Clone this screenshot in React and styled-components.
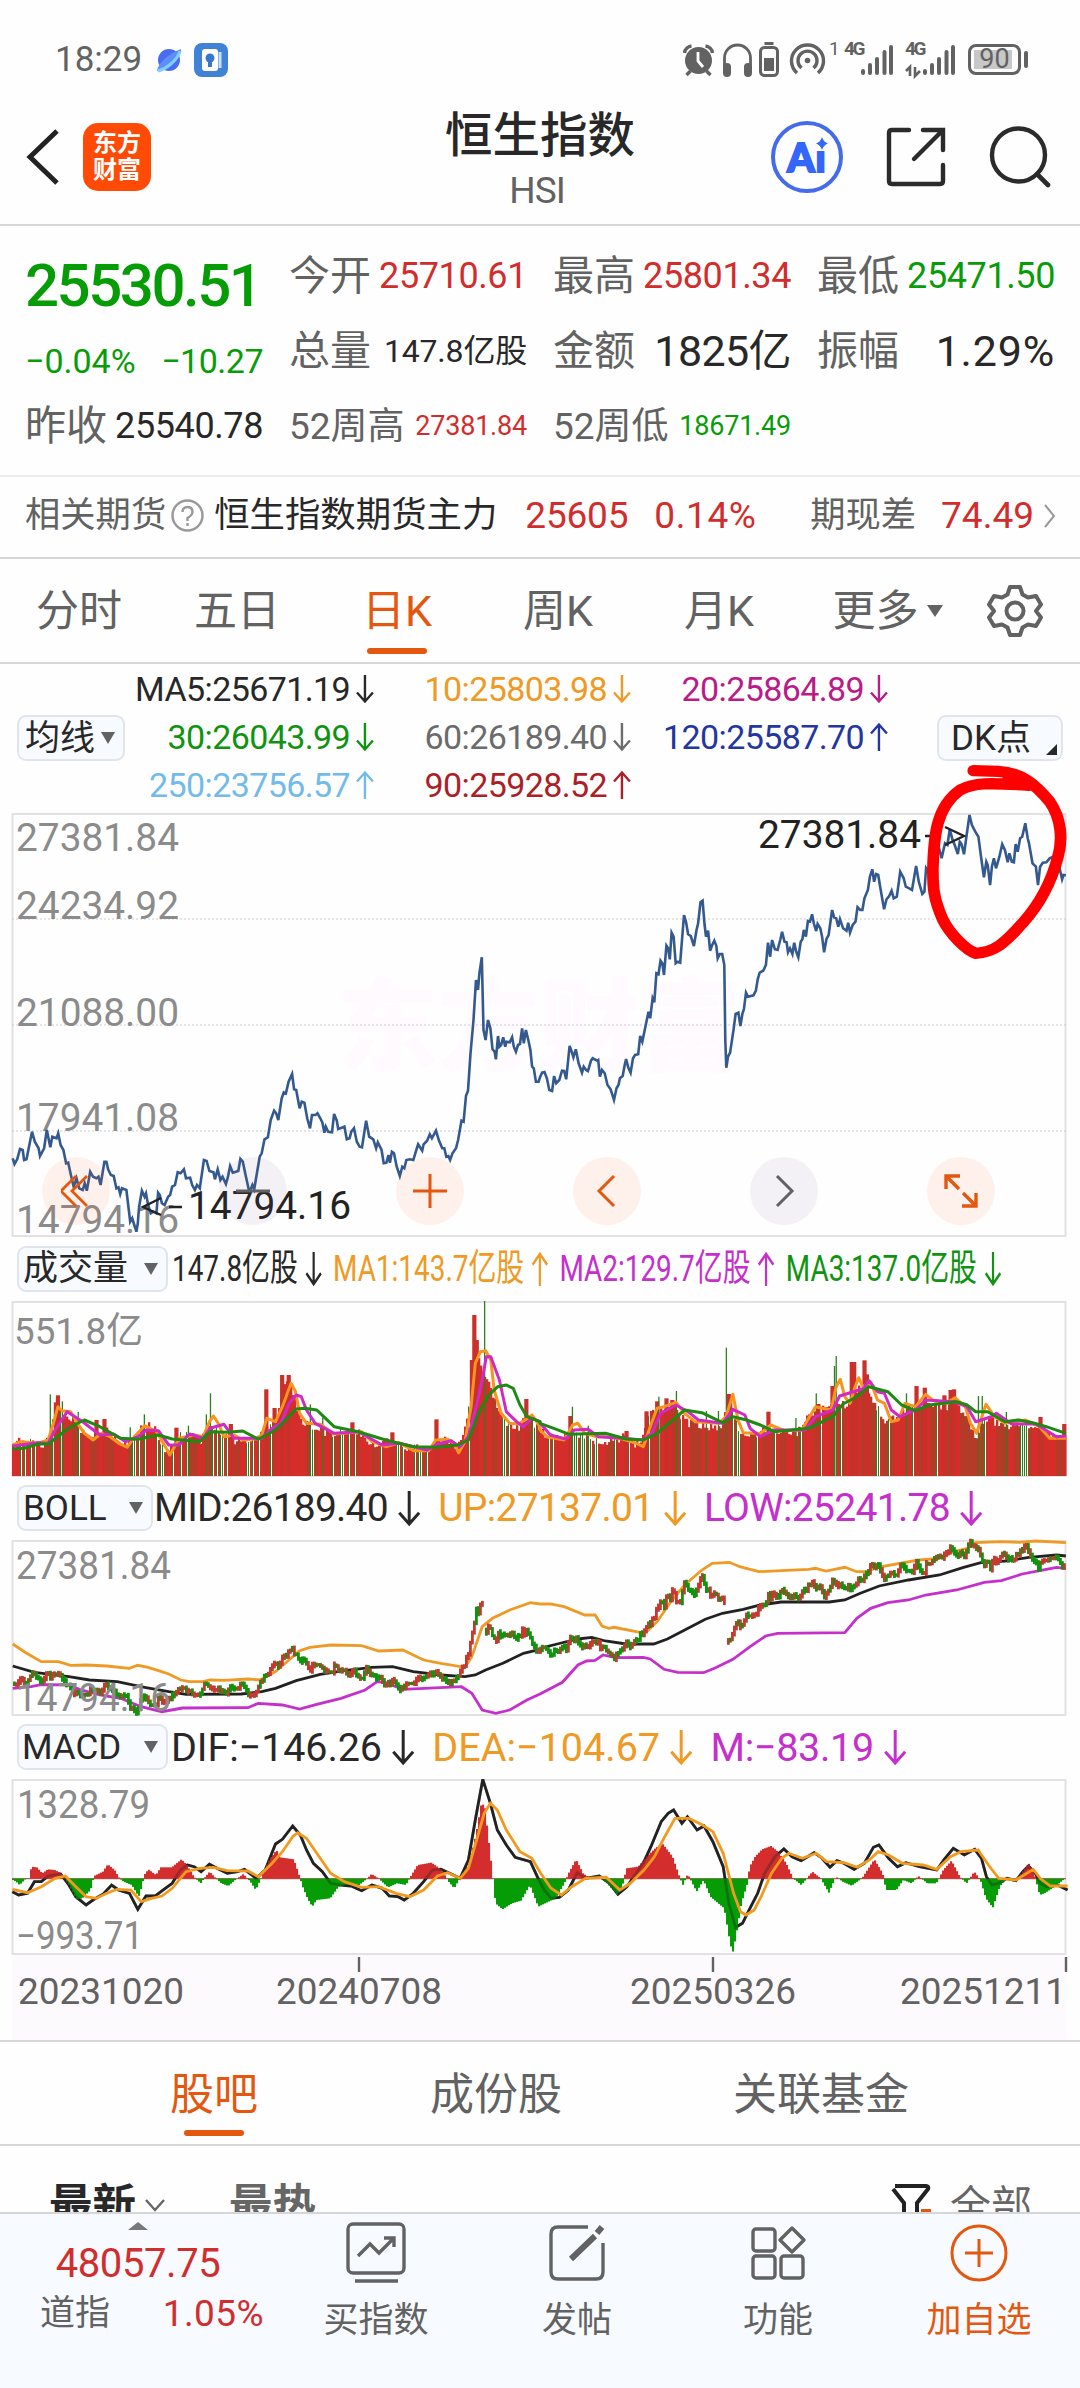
import styled, { createGlobalStyle } from 'styled-components';

const GlobalStyle = createGlobalStyle`
*{
    box-sizing:border-box;
}
body{
    margin:0;
    background-color:#fefefe;
    font-family:Roboto, "Noto Sans CJK SC", sans-serif;
    color:#282828;
}
`;

const RED = '#d22d2d';
const GREEN = '#089c08';
const GRAY = '#626262';
const ORANGE = '#e4570f';
const YELLOW = '#ee9a25';
const PURPLE = '#c52fcb';

const Container = styled.div`
width:1080px;
height:2388px;
display:flex;
flex-direction:column;
overflow:hidden;
background-color:#fefefe;
`;

const Num = styled.span`
font-size:${p => p.$size || 36}px;
letter-spacing:${p => p.$ls || 0}px;
font-weight:${p => p.$weight || 400};
color:${p => p.$color || 'inherit'};
line-height:1;
white-space:nowrap;
`;

/* status bar */

const StatusBar = styled.div`
display:flex;
justify-content:space-between;
align-items:center;
height:80px;
padding:40px 51px 0 55px;
color:${GRAY};
`;

const StatusGroup = styled.div`
display:flex;
align-items:center;
`;

const SmallIcon = styled.svg`
display:block;
flex:none;
overflow:visible;
margin-left:${p => p.$ml || 0}px;
`;

/* title bar */

const TitleBar = styled.div`
display:grid;
grid-template-columns:356px 1fr 356px;
height:146px;
border-bottom:2px solid #d6d6d8;
`;

const TitleLeft = styled.div`
display:flex;
align-items:center;
gap:24px;
padding:11px 0 0 26px;
`;

const Logo = styled.div`
display:flex;
flex-direction:column;
align-items:center;
justify-content:center;
width:68px;
height:68px;
border-radius:15px;
background-color:#ff4b05;
color:white;
font-size:24px;
font-weight:700;
line-height:27px;
`;

const TitleCenter = styled.div`
display:flex;
flex-direction:column;
align-items:center;
padding:32px 0 0 0;
`;

const Title = styled.div`
font-size:47.5px;
font-weight:500;
line-height:48px;
`;

const SubTitle = styled.div`
margin-top:11px;
padding-right:6px;
color:${GRAY};
font-size:37px;
letter-spacing:-1px;
line-height:40px;
`;

const TitleRight = styled.div`
display:flex;
align-items:center;
justify-content:flex-end;
gap:43px;
padding:11px 29px 0 0;
`;

/* quote */

const Quote = styled.div`
display:grid;
grid-template-columns:repeat(4, 238px);
grid-template-rows:repeat(3, 75px);
column-gap:26px;
height:251px;
padding:13px 25px 0 25px;
border-bottom:2px solid #ececec;
`;

const Cell = styled.div`
display:flex;
align-items:center;
justify-content:space-between;
padding-top:${p => p.$top || 0}px;
`;

const Label = styled.span`
color:${GRAY};
font-size:${p => p.$size || 41}px;
letter-spacing:${p => p.$ls || 0}px;
line-height:1;
white-space:nowrap;
`;

const Futures = styled.div`
display:flex;
align-items:center;
height:82px;
padding:0 24px 2px 25px;
border-bottom:2px solid #d6d6d8;
`;

const FutureName = styled.span`
margin:0 28px 0 10px;
font-size:35.4px;
line-height:1;
white-space:nowrap;
`;

/* tabs */

const Tabs = styled.div`
display:grid;
grid-template-columns:158px 158px 162px 160px 162px 175px 80px;
height:105px;
border-bottom:2px solid #d6d6d8;
`;

const Tab = styled.div`
position:relative;
display:flex;
align-items:center;
justify-content:center;
gap:8px;
padding-top:${p => p.$top || 2}px;
color:${p => (p.$active ? ORANGE : GRAY)};
font-size:${p => p.$size || 43}px;
line-height:1;
white-space:nowrap;
&::after{
    content:'';
    display:${p => (p.$active ? 'block' : 'none')};
    position:absolute;
    bottom:${p => p.$line || 8}px;
    width:60px;
    height:6px;
    border-radius:3px;
    background-color:${ORANGE};
}
`;

const Caret = styled.i`
border:${p => p.$w || 7}px solid transparent;
border-top:12px solid ${GRAY};
border-bottom:0;
`;

/* charts */

const Legend = styled.div`
display:flex;
justify-content:space-between;
align-items:center;
height:150px;
padding:0 17px;
`;

const MaGrid = styled.div`
display:grid;
grid-template-columns:237px 257px 257px;
grid-auto-rows:48px;
margin:-2px 0 0 12px;
flex:1;
`;

const MaItem = styled.div`
display:flex;
align-items:center;
justify-content:flex-end;
gap:6px;
color:${p => p.$color};
`;

const Pill = styled.div`
display:flex;
align-items:center;
justify-content:space-between;
position:relative;
flex:none;
width:${p => p.$w}px;
height:46px;
padding:${p => p.$pad || '0 8px 0 6px'};
border:2px solid #e1e4ec;
border-radius:9px;
background-color:#f7faff;
font-size:35px;
line-height:1;
white-space:nowrap;
`;

const Corner = styled.i`
position:absolute;
right:4px;
bottom:4px;
border-left:11px solid transparent;
border-bottom:11px solid #282828;
`;

const IndicatorHead = styled.div`
display:flex;
align-items:center;
height:${p => p.$h || 63}px;
padding:0 17px 1px;
`;

const IndicatorValues = styled.div`
display:flex;
align-items:center;
margin-left:${p => p.$ml}px;
transform:scaleX(${p => p.$scale || 1});
transform-origin:left center;
`;

const Value = styled.span`
display:flex;
align-items:center;
gap:${p => p.$gap || 10}px;
margin-right:${p => p.$mr || 18}px;
color:${p => p.$color || 'inherit'};
font-size:${p => p.$size || 39}px;
letter-spacing:${p => p.$ls || 0}px;
line-height:1;
white-space:nowrap;
`;

const ChartBox = styled.div`
position:relative;
width:1055px;
height:${p => p.$h}px;
margin-left:12px;
`;

const Plot = styled.svg`
display:block;
overflow:visible;
font-family:Roboto, "Noto Sans CJK SC", sans-serif;
`;

const Controls = styled.div`
position:absolute;
left:30px;
bottom:12px;
display:flex;
gap:109px;
`;

const RoundBtn = styled.button`
all:unset;
display:flex;
align-items:center;
justify-content:center;
width:68px;
height:68px;
border-radius:50%;
background-color:${p => (p.$gray ? 'rgba(120,90,140,0.08)' : 'rgba(255,90,30,0.08)')};
cursor:pointer;
`;

const Dates = styled.div`
height:85px;
margin-left:12px;
width:1055px;
background-color:#fdfafd;
`;

/* bottom part */

const ForumTabs = styled.div`
display:grid;
grid-template-columns:350px 214px 436px;
padding-left:39px;
height:106px;
border-top:2px solid #d6d6d8;
border-bottom:2px solid #d6d6d8;
`;

const PostFilter = styled.div`
display:flex;
align-items:flex-start;
height:66px;
padding:37px 48px 0 49px;
overflow:hidden;
`;

const FilterText = styled.span`
font-size:${p => p.$size || 43.5}px;
font-weight:${p => p.$weight || 700};
color:${p => p.$color || '#282828'};
line-height:46px;
`;

const BottomBar = styled.div`
display:grid;
grid-template-columns:276px 200px 202px 200px 202px;
height:176px;
border-top:2px solid #d6d6d8;
background-color:#f7faff;
`;

const IndexBox = styled.div`
display:flex;
flex-direction:column;
align-items:center;
`;

const IndexRow = styled.div`
display:flex;
justify-content:space-between;
align-items:center;
width:224px;
margin:11px 0 0 28px;
`;

const UpMark = styled.i`
margin-top:8px;
border:10px solid transparent;
border-bottom:8px solid #77777c;
border-top:0;
`;

const BarItem = styled.div`
display:flex;
flex-direction:column;
align-items:center;
gap:16px;
padding-top:7px;
color:${p => p.$color || GRAY};
font-size:35px;
line-height:40px;
`;

const Arrow = ({ up, size = 28 }) => (
    <SmallIcon width={size * 0.64} height={size} viewBox="0 0 18 28" fill="none" stroke="currentColor" strokeWidth="2.4">
        <path d={up ? 'M9 28V2M1 10.5L9 1.5l8 9' : 'M9 0v26M1 17.5l8 9 8-9'} />
    </SmallIcon>
);

const parse = (str) => str.trim().split(/\s+/).map(p => p.split(',').map(Number));

// data is stored as two halves of 540px each, in 1/3 px steps
const series = (left, right, dyLeft, dyRight = dyLeft) => [
    ...parse(left).map(([x, y]) => [x * 0.3444 - 12, y / 3 - dyLeft]),
    ...parse(right).map(([x, y]) => [x * 0.3444 + 528, y / 3 - dyRight]),
];

const toPoints = (data) => data.map(([x, y]) => `${x.toFixed(1)},${y.toFixed(1)}`).join(' ');

const valueAt = (data, x) => {
    let i = 1;
    while (i < data.length - 1 && data[i][0] < x) i += 1;
    const [x0, y0] = data[i - 1];
    const [x1, y1] = data[i];
    if (x1 === x0) return y1;
    const t = Math.min(1, Math.max(0, (x - x0) / (x1 - x0)));
    return y0 + (y1 - y0) * t;
};

const noise = (n) => {
    const v = Math.sin(n * 127.1) * 43758.5453;
    return v - Math.floor(v);
};

const price = series(
    `37,1075 42,1092 50,1078 58,1047 66,1050 70,1080 77,1078 93,995 101,1025 112,1045 116,1068 128,1045 136,990 146,1042 152,1010 164,1015 169,1000 176,1035 184,1050 192,1090 198,1088 206,1125 214,1160 222,1135 230,1165 240,1170 246,1150 252,1172 262,1115 270,1130 280,1135 286,1130 292,1155 303,1085 309,1085 314,1108 322,1125 330,1128 338,1165 344,1162 349,1182 354,1165 367,1170 374,1230 378,1265 384,1255 390,1275 396,1295 400,1270 404,1220 412,1172 420,1190 424,1180 430,1215 438,1240 446,1235 454,1240 459,1178 464,1185 470,1210 478,1215 488,1190 494,1185 500,1160 508,1155 516,1117 524,1120 534,1108 540,1135 552,1133 558,1155 566,1170 572,1155 580,1165 592,1080 600,1083 608,1113 620,1117 624,1138 632,1108 640,1140 646,1130 656,1152 662,1130 668,1098 676,1118 692,1113 698,1077 705,1085 712,1120 722,1168 728,1168 733,1155 738,1168 746,1120 754,1070 760,1060 768,1018 778,1012 786,960 796,932 802,940 808,960 818,895 824,877 830,880 838,845 848,822 854,868 860,870 870,925 876,905 884,908 892,955 900,985 906,945 916,945 922,940 930,955 936,968 942,998 946,980 953,995 964,997 970,942 978,962 982,987 996,982 1000,980 1007,1018 1015,1015 1020,995 1028,985 1036,1025 1044,1040 1051,1042 1063,962 1072,1010 1084,1018 1092,1045 1097,1027 1108,1050 1114,1090 1122,1088 1128,1065 1132,1088 1138,1055 1144,1060 1152,1100 1161,1128 1168,1100 1174,1105 1180,1080 1190,1078 1200,1080 1206,1060 1214,1033 1226,1052 1230,1033 1240,1022 1248,1003 1254,1015 1266,992 1274,1020 1284,1045 1290,1045 1296,1070 1302,1068 1307,1080 1314,1060 1324,1045 1330,1020 1340,962 1346,965 1353,887 1359,872 1366,760 1375,660 1382,540 1388,570 1392,520 1399,472 1404,690 1410,720 1417,660 1424,685 1430,748 1436,755 1440,778 1446,708 1450,740 1455,735 1461,712 1467,740 1471,725 1480,727 1487,712 1492,740 1498,755 1504,735 1510,732 1516,685 1521,730 1527,690 1535,725 1540,750 1545,800 1550,805 1556,845 1564,845`,
    `0,1012 6,998 13,996 20,1015 27,1050 35,1053 41,1008 47,1030 56,1020 64,992 70,993 76,1018 86,918 92,935 97,952 104,928 112,970 122,998 127,980 134,990 139,993 148,962 153,955 166,962 169,960 174,1010 180,990 188,1000 196,1035 205,1048 215,1080 222,1045 228,1035 232,1015 240,1008 246,975 250,957 256,982 263,998 270,955 276,945 285,943 291,888 297,905 306,860 315,815 320,835 327,775 332,787 338,700 344,703 350,662 355,670 360,705 367,617 372,625 377,658 382,578 388,590 394,670 400,665 407,668 418,525 424,545 430,583 438,588 447,618 454,572 459,550 466,487 472,482 478,555 482,590 488,572 494,632 500,615 506,602 512,617 516,655 522,642 529,642 535,675 538,900 541,983 546,950 552,938 562,868 568,822 576,818 582,858 588,820 592,808 598,758 604,770 620,766 627,752 632,718 638,698 648,692 656,675 662,608 668,650 674,600 682,628 690,630 698,598 703,575 710,605 716,607 720,637 726,625 733,642 738,608 744,635 750,652 757,605 762,598 766,570 772,590 778,543 784,545 790,523 795,550 802,573 806,552 814,565 819,590 825,637 832,597 838,585 848,510 854,532 860,535 866,560 871,538 880,565 890,572 895,548 900,578 908,555 916,545 922,502 930,510 936,510 942,475 952,450 958,410 965,388 970,425 976,402 982,405 990,455 999,508 1006,478 1014,468 1021,452 1027,475 1036,470 1042,425 1046,395 1056,415 1062,440 1072,445 1080,450 1092,378 1100,425 1110,462 1116,455 1121,385 1130,400 1140,360 1160,330 1166,355 1176,310 1183,315 1190,268 1198,300 1204,315 1213,342 1219,305 1224,312 1231,343 1238,290 1247,225 1254,255 1264,275 1273,290 1280,345 1289,412 1296,365 1300,375 1307,435 1312,380 1318,355 1324,385 1334,350 1342,313 1350,330 1358,367 1363,340 1370,365 1376,367 1381,312 1387,335 1394,295 1400,290 1409,250 1416,295 1420,310 1430,370 1440,380 1446,435 1452,380 1460,368 1470,367 1480,355 1490,350 1500,340 1510,390 1516,418 1520,405 1527,406`,
    13, 73
);

const volumeLevel = series(
    `37,612 60,600 90,605 120,618 140,595 155,520 172,510 190,530 220,550 250,590 280,575 310,575 340,610 370,612 400,575 420,555 450,570 478,640 500,610 520,590 550,585 580,600 600,560 620,560 650,580 680,600 700,600 740,600 765,560 790,560 820,440 840,430 860,510 880,550 920,560 960,590 1000,570 1040,580 1080,615 1140,605 1180,625 1240,625 1290,600 1325,630 1350,560 1365,460 1380,320 1400,400 1415,420 1430,480 1460,540 1500,565 1530,530 1568,575`,
    `0,575 40,595 80,590 110,585 150,600 180,610 240,590 285,620 305,560 325,510 370,500 400,520 430,550 480,560 520,560 550,480 575,570 600,590 640,575 700,570 740,580 780,530 820,510 860,490 900,500 920,450 945,430 970,490 1000,545 1040,530 1080,500 1120,490 1170,500 1210,500 1240,540 1262,600 1290,530 1320,550 1360,555 1400,545 1440,560 1480,590 1527,585`,
    61
);

const volumeSpikes = [
    ...parse(`146,463,1 168,466,0 162,487,0 181,484,1 227,516,1 280,540,0 303,537,0 378,562,1 419,523,1 512,563,0 547,557,1 599,523,1 611,460,1 670,552,0 773,448,0 797,504,0 819,405,0 838,405,0 901,493,1 937,533,1 1023,547,0 1139,577,0 1267,538,0 1370,360,0 1377,225,0 1384,300,0 1407,183,1 1528,477,0`)
        .map(([x, y, g]) => [x * 0.3444 - 12, y / 3 - 61, g]),
    ...parse(`88,528,0 94,500,1 140,557,1 251,573,0 309,514,0 340,484,0 345,470,1 367,475,0 384,480,0 396,453,1 483,513,1 518,513,1 541,323,1 548,462,0 663,515,0 743,534,1 802,460,1 808,492,0 849,438,0 855,378,1 860,348,1 905,366,0 912,366,0 942,361,0 949,403,0 1064,460,1 1093,438,0 1117,443,0 1174,466,0 1192,450,0 1202,448,0 1273,468,1 1284,468,1 1354,516,1 1453,531,0 1522,552,0`)
        .map(([x, y, g]) => [x * 0.3444 + 528, y / 3 - 61, g]),
];

const volumeMa = [
    ['#f7941d', series(
        `37,615 60,605 110,610 140,600 155,550 168,500 180,512 205,515 225,550 245,580 270,600 295,580 320,590 345,610 370,622 390,590 420,557 455,575 480,620 493,645 510,615 520,595 565,585 590,590 608,545 620,528 635,552 650,590 680,585 705,600 740,597 760,585 775,535 800,545 820,500 845,430 858,455 870,520 890,550 930,553 970,582 1050,575 1080,605 1120,620 1160,608 1200,632 1245,632 1265,600 1300,598 1318,610 1332,638 1350,605 1368,500 1380,370 1395,335 1410,332 1425,360 1435,450 1455,520 1480,550 1505,552 1525,540 1545,525 1568,560`,
        `0,570 20,590 70,600 95,555 110,550 130,580 165,590 190,590 240,597 280,610 300,620 320,560 340,505 360,500 395,487 420,520 450,545 520,550 540,530 560,463 575,540 590,578 620,580 640,580 670,555 710,572 760,570 800,500 820,505 845,510 860,440 872,418 885,470 900,490 915,440 925,413 940,445 960,425 980,480 1000,490 1020,545 1040,540 1060,490 1090,500 1120,463 1140,480 1180,490 1205,473 1235,500 1250,550 1268,580 1280,540 1295,493 1320,530 1350,550 1410,540 1450,560 1480,595 1527,595`, 61)],
    ['#cf2bc4', series(
        `37,618 110,608 140,610 160,570 195,515 240,545 290,585 330,582 365,605 400,590 425,570 460,572 490,615 520,615 550,582 590,595 610,565 650,553 680,595 760,595 790,565 815,550 840,490 860,465 875,470 890,510 915,550 970,580 1040,575 1110,615 1160,610 1240,630 1270,612 1310,602 1335,620 1360,590 1385,490 1400,420 1412,350 1425,350 1450,420 1470,515 1500,545 1520,560 1545,535 1568,545`,
        `0,548 30,585 75,597 100,570 140,568 170,590 240,595 300,600 325,580 350,520 395,495 430,515 460,540 530,550 560,508 595,525 610,565 640,590 680,570 770,570 800,530 850,510 870,468 910,455 940,445 955,422 980,455 1000,460 1020,510 1045,530 1090,510 1120,480 1200,485 1240,500 1265,545 1310,530 1325,520 1370,552 1440,552 1500,590 1527,588`, 61)],
    ['#1f8a12', series(
        `37,627 70,625 110,612 140,612 180,580 210,558 245,540 290,560 350,595 400,598 460,585 500,597 580,605 610,575 660,577 705,573 750,598 800,570 825,545 860,507 885,505 920,510 940,530 970,560 1040,575 1120,600 1200,620 1270,622 1330,615 1360,600 1390,520 1420,465 1445,440 1470,435 1490,445 1510,495 1530,530 1568,545`,
        `0,550 40,565 85,583 190,580 250,597 300,600 340,580 380,545 420,510 470,518 530,548 560,530 600,540 640,555 680,575 780,565 850,530 880,492 920,470 955,440 1010,455 1050,495 1090,512 1130,495 1210,485 1240,495 1265,515 1300,515 1350,545 1390,540 1430,548 1470,560 1527,580`, 61)],
];

const bands = [
    [YELLOW, series(
        `37,492 75,518 120,545 170,545 205,556 250,555 310,558 375,565 400,556 430,562 460,572 490,582 525,600 550,605 590,605 610,600 650,601 720,597 755,600 800,575 850,530 870,512 900,502 960,495 1050,497 1100,513 1170,510 1200,525 1230,540 1280,550 1350,562 1370,530 1400,440 1430,415 1480,390 1540,368 1568,372`,
        `0,372 30,372 70,380 130,405 160,405 180,438 200,445 215,442 290,457 310,455 340,425 380,365 420,315 470,270 500,250 550,247 580,260 635,275 700,272 780,268 800,265 830,273 885,262 920,275 950,275 980,262 1100,240 1160,235 1200,215 1240,205 1265,188 1340,185 1390,187 1440,183 1527,188`, 60)],
    ['#222', series(
        `37,558 100,577 200,590 260,600 340,605 420,622 490,635 540,643 700,642 760,635 800,625 860,602 930,583 1000,572 1080,562 1140,560 1200,575 1280,585 1350,590 1380,585 1410,570 1460,550 1520,520 1568,508`,
        `0,505 50,492 110,477 150,472 190,483 250,492 330,492 370,477 430,445 480,418 530,400 590,388 640,375 700,366 780,366 840,366 885,360 930,340 985,318 1070,300 1160,285 1230,262 1280,248 1350,243 1420,232 1500,225 1527,228`, 60)],
    [PURPLE, series(
        `37,625 90,620 120,614 200,615 230,628 290,645 350,655 410,680 470,695 530,684 720,683 750,670 820,675 870,687 920,673 990,655 1060,630 1095,605 1120,608 1170,628 1340,620 1370,640 1400,690 1440,700 1480,690 1530,660 1568,642`,
        `0,642 65,607 110,555 135,543 160,541 183,525 220,533 300,532 320,537 360,568 400,577 475,578 510,563 560,538 610,500 655,468 690,460 885,458 920,415 960,385 1010,368 1070,360 1120,345 1210,330 1290,307 1340,302 1400,282 1470,268 1500,262 1527,265`, 60)],
];

const wide = (str) => parse(str).map(([x, y]) => [x * 0.6888 - 12, y / 3 - 9]);

const dif = wide(`18,365 27,375 40,370 50,335 60,335 70,318 88,312 100,345 110,380 125,405 135,390 150,372 162,345 172,360 188,370 200,418 212,378 225,378 240,355 250,340 262,300 272,285 282,290 292,305 304,283 318,298 330,310 345,305 355,298 372,325 385,300 400,222 410,208 425,168 436,195 445,240 455,280 468,305 480,340 495,345 510,348 525,362 540,345 555,355 565,378 578,380 587,390 600,370 615,335 628,300 640,298 655,312 668,325 680,270 690,150 701,28 712,100 722,180 735,225 748,262 770,275 780,320 790,360 800,385 812,382 825,360 838,308 850,325 870,318 885,340 897,373 910,350 920,320 935,275 945,230 960,155 970,130 978,120 990,160 998,140 1012,180 1022,168 1035,215 1050,290 1058,400 1068,472 1078,460 1090,410 1100,370 1110,310 1125,260 1138,237 1150,260 1163,272 1182,248 1192,262 1205,292 1215,272 1225,280 1240,298 1255,280 1268,232 1276,225 1290,265 1303,290 1315,278 1335,290 1360,300 1370,270 1384,235 1400,255 1415,238 1425,265 1432,320 1440,345 1450,340 1462,325 1475,332 1485,305 1493,288 1503,310 1510,340 1520,350 1535,345 1550,360`);
const dea = wide(`18,358 40,368 60,350 80,325 95,318 110,350 125,380 140,385 155,370 170,358 190,360 205,395 220,385 235,378 250,355 270,305 290,295 310,292 330,302 360,303 375,320 395,280 410,245 425,200 432,188 445,205 460,250 480,310 500,335 525,352 550,350 575,370 595,380 615,360 635,318 650,308 668,325 680,295 692,210 703,130 712,100 722,120 735,180 755,245 772,265 785,310 800,355 815,375 830,350 850,325 880,322 900,360 915,340 935,300 950,260 965,200 980,145 1000,145 1020,165 1035,185 1050,250 1065,370 1075,425 1083,435 1095,420 1105,380 1120,310 1135,265 1145,250 1165,265 1185,250 1200,275 1225,278 1245,292 1262,270 1275,245 1290,255 1310,280 1340,285 1360,298 1380,260 1395,245 1420,240 1435,285 1450,325 1475,330 1500,298 1510,325 1525,348 1550,348`);
const hist = wide(`18,330 22,335 27,345 35,328 42,325 44,290 52,292 60,310 68,298 78,300 86,308 92,325 96,335 110,388 118,385 130,360 135,318 148,305 155,283 165,300 172,325 178,335 190,345 200,380 205,345 208,315 214,298 225,315 232,292 248,292 262,268 270,285 280,320 290,340 296,322 303,305 312,325 320,340 330,348 340,330 352,312 362,335 370,360 378,322 388,275 400,240 405,262 425,268 432,310 438,350 445,385 452,410 458,390 478,385 490,350 500,345 520,345 532,325 538,312 548,325 562,352 575,340 588,345 596,315 605,285 625,278 640,300 650,335 658,355 668,318 680,280 690,190 697,105 702,103 708,210 714,320 718,400 728,418 742,400 755,392 768,345 780,410 790,400 805,385 818,340 824,310 835,268 845,310 855,325 868,318 880,340 895,375 902,350 908,295 925,290 940,255 950,235 960,220 975,260 985,320 990,345 997,312 1010,365 1020,330 1030,380 1050,415 1057,500 1062,552 1067,500 1075,400 1083,345 1087,290 1095,260 1105,238 1118,228 1128,245 1140,280 1150,325 1162,345 1178,305 1190,325 1202,368 1212,320 1222,335 1235,347 1250,325 1268,268 1280,310 1285,360 1300,360 1310,330 1322,340 1332,318 1345,340 1358,340 1368,300 1380,272 1392,320 1402,340 1413,305 1422,330 1430,385 1440,413 1450,350 1460,325 1470,335 1478,320 1492,280 1500,310 1508,375 1515,370 1530,350 1545,325 1550,345`);

const days = Array.from({ length: 527 }, (_, i) => i * 2);

const Frame = ({ h }) => <rect x="0.5" y="1" width="1053" height={h - 2} fill="none" stroke="#e2e2e3" strokeWidth="2" />;

const AxisText = ({ x, y, w, size = 39, color = '#8b8b8b', children }) => (
    <text x={x} y={y} textLength={w} lengthAdjust="spacingAndGlyphs" fontSize={size} fill={color}>{children}</text>
);

const PriceChart = () => (
    <ChartBox $h={424}>
        <Plot width="1055" height="424">
            <text x="325" y="250" fontSize="101" fontWeight="900" textLength="404" fill="#fefafe">东方财富</text>
            <Frame h={424} />
            {[106, 212, 318].map(y => (
                <line key={y} x1="0" x2="1054" y1={y} y2={y} stroke="#d3ccd0" strokeDasharray="2 2" />
            ))}
            <AxisText x="4" y="38" w="163">27381.84</AxisText>
            <AxisText x="4" y="106" w="163">24234.92</AxisText>
            <AxisText x="4" y="213" w="163">21088.00</AxisText>
            <AxisText x="4" y="318" w="163">17941.08</AxisText>
            <AxisText x="4" y="420" w="163">14794.16</AxisText>
            <polyline points={toPoints(price)} fill="none" stroke="#33598f" strokeWidth="2.6" />
            <AxisText x="746" y="35" w="163" color="#222">27381.84</AxisText>
            <path d="M913 23h7M933 14l19 9-19 9" fill="none" stroke="#222" strokeWidth="2.4" />
            <AxisText x="176" y="406" w="163" color="#222">14794.16</AxisText>
            <path d="M149 385l-18 9 18 8M157 394h13" fill="none" stroke="#222" strokeWidth="2.4" />
        </Plot>
        <Controls>
            <RoundBtn>
                <svg width="30" height="36" fill="none" stroke={ORANGE} strokeWidth="2.8"><path d="M15 3L0 18l15 15M26 3L11 18l15 15" /></svg>
            </RoundBtn>
            <RoundBtn $gray>
                <svg width="34" height="34" stroke={GRAY} strokeWidth="3"><path d="M0 17h34" /></svg>
            </RoundBtn>
            <RoundBtn>
                <svg width="34" height="34" stroke={ORANGE} strokeWidth="3"><path d="M0 17h34M17 0v34" /></svg>
            </RoundBtn>
            <RoundBtn>
                <svg width="22" height="34" fill="none" stroke={ORANGE} strokeWidth="3"><path d="M18 2L3 17l15 15" /></svg>
            </RoundBtn>
            <RoundBtn $gray>
                <svg width="22" height="34" fill="none" stroke={GRAY} strokeWidth="3"><path d="M4 2l15 15L4 32" /></svg>
            </RoundBtn>
            <RoundBtn>
                <svg width="34" height="34" fill="none" stroke={ORANGE} strokeWidth="3.4"><path d="M2 15V2h14M2 2l13 13M32 19v13H18M32 32L19 19" /></svg>
            </RoundBtn>
        </Controls>
        <Marker width="1055" height="424">
            <path
                transform="translate(528 -73) scale(.3444 .3333)"
                d="M1258 92L1330 94C1400 98 1440 135 1480 185C1514 235 1518 300 1504 350C1484 430 1448 495 1405 545C1350 610 1320 637 1265 640C1235 630 1190 580 1170 540C1142 475 1140 440 1141 380C1144 290 1150 200 1220 150C1260 128 1300 128 1420 136L1360 112"
            />
        </Marker>
    </ChartBox>
);

const Marker = styled.svg`
position:absolute;
left:0;
top:0;
overflow:visible;
pointer-events:none;
fill:none;
stroke:#ff0000;
stroke-width:34px;
stroke-linecap:round;
stroke-linejoin:round;
`;

const VolumeChart = () => {
    const bars = days.map((x, i) => {
        const rnd = noise(i);
        const green = noise(Math.floor(i / 4) + 900) > 0.68 ? i % 3 === 0 || rnd > 0.65 : rnd > 0.94;
        const y = valueAt(volumeLevel, x) + (noise(i + 300) - 0.5) * 9;
        return { x, y, green, dark: noise(Math.floor(i / 3) + 50) > 0.62 };
    });
    return (
        <ChartBox $h={176}>
            <Plot width="1055" height="176">
                <Frame h={176} />
                <AxisText x="2" y="43" w="129" size={37}>551.8亿</AxisText>
                {bars.map(b => (
                    <rect key={b.x} x={b.x} y={b.y} width={b.green ? 1 : 2.3} height={175 - b.y} fill={b.green ? '#2f7f1f' : b.dark ? '#b43b28' : '#d42d2a'} />
                ))}
                {volumeSpikes.map(([x, y, g]) => (
                    <rect key={`${x}`} x={x - (g ? 0.6 : 2)} y={y} width={g ? 1.3 : 4.2} height={175 - y} fill={g ? '#2f7f1f' : '#c83029'} />
                ))}
                {volumeMa.map(([color, data]) => (
                    <polyline key={color} points={toPoints(data)} fill="none" stroke={color} strokeWidth="3" strokeLinejoin="round" />
                ))}
            </Plot>
        </ChartBox>
    );
};

const BollChart = () => (
    <ChartBox $h={176}>
        <Plot width="1055" height="176">
            <Frame h={176} />
            {bands.map(([color, data]) => (
                <polyline key={color} points={toPoints(data)} fill="none" stroke={color} strokeWidth="2.8" />
            ))}
            {days.slice(1).map((x, i) => {
                const a = valueAt(price, x - 2) * 0.414;
                const b = valueAt(price, x) * 0.414;
                // the opening gap of april leaves a hole in the candles
                if (b - a > 14) return null;
                const flip = noise(i + 70) > 0.72;
                const up = flip ? b > a : b <= a;
                const pad = 1.4 + noise(i) * 2;
                return (
                    <rect key={x} x={x - 1} y={Math.min(a, b) - pad} width="2.8" height={Math.abs(b - a) + pad * 2} fill={up ? '#c23a30' : '#12930f'} />
                );
            })}
            <AxisText x="4" y="39" w="155" size={38}>27381.84</AxisText>
            <AxisText x="4" y="171" w="155" size={38}>14794.16</AxisText>
        </Plot>
    </ChartBox>
);

const MacdChart = () => (
    <ChartBox $h={176}>
        <Plot width="1055" height="176">
            <Frame h={176} />
            <line x1="0" x2="1054" y1="99.7" y2="99.7" stroke="#9c4a3a" strokeWidth="1" />
            <polyline points={toPoints(dif)} fill="none" stroke="#222" strokeWidth="2.8" />
            {days.map(x => {
                const y = valueAt(hist, x);
                const up = y < 99.7;
                return <rect key={x} x={x} y={up ? y : 99.7} width="2.1" height={Math.abs(y - 99.7)} fill={up ? '#d42d2d' : '#069c06'} />;
            })}
            <polyline points={toPoints(dif)} fill="none" stroke="#222" strokeWidth="2.8" opacity="0.35" />
            <polyline points={toPoints(dea)} fill="none" stroke="#f39a1e" strokeWidth="2.8" />
            <AxisText x="5" y="39" w="133" size={38}>1328.79</AxisText>
            <AxisText x="4" y="170" w="127" size={38}>−993.71</AxisText>
        </Plot>
    </ChartBox>
);

const maList = [
    ['MA5:25671.19', '#282828'], ['10:25803.98', YELLOW], ['20:25864.89', '#bb1b86'],
    ['30:26043.99', '#109310'], ['60:26189.40', '#6b6b6b'], ['120:25587.70', '#2436a0', true],
    ['250:23756.57', '#72bbe9', true], ['90:25928.52', '#ac1f27', true],
];

const tabs = ['分时', '五日', '日K', '周K', '月K'];

const Signal = ({ ml }) => (
    <SmallIcon $ml={ml} width="32" height="32" stroke={GRAY} strokeWidth="4" strokeLinecap="round">
        <path d="M2 29v-2M9 29v-8M16 29v-14M23.500 29V8M30 29V3" />
    </SmallIcon>
);

const NetType = styled.span`
align-self:flex-start;
margin-left:${p => p.$ml}px;
width:${p => p.$w}px;
height:32px;
font-size:19px;
font-weight:${p => p.$weight || 700};
letter-spacing:-2.5px;
line-height:14px;
`;

export default function App() {
    return (
        <Container>
            <GlobalStyle />
            <StatusBar>
                <StatusGroup>
                    <Num $size={35}>18:29</Num>
                    <SmallIcon $ml={14} width="26" height="26" viewBox="0 0 26 26">
                        <circle cx="13" cy="13" r="11" fill="#4a6cf0" />
                        <path d="M1 24C2 15 16 5 25 2c1 8-13 22-24 22z" fill="#5c8ff7" />
                        <path d="M2 24C10 22 21 14 24 4" fill="none" stroke="#7fd0fb" strokeWidth="3" />
                    </SmallIcon>
                    <SmallIcon $ml={12} width="34" height="34" viewBox="0 0 34 34">
                        <rect width="34" height="34" rx="8" fill="#4083d6" />
                        <path d="M26 9v16" stroke="#c9e0fb" strokeWidth="3" />
                        <rect x="8" y="6" width="16" height="22" rx="3" fill="white" />
                        <circle cx="16" cy="15" r="4.5" fill="#3778cf" />
                        <path d="M16 18v6" stroke="#3778cf" strokeWidth="4" />
                    </SmallIcon>
                </StatusGroup>
                <StatusGroup>
                    <SmallIcon width="31" height="32" viewBox="0 0 31 32">
                        <circle cx="15.5" cy="16.5" r="13.5" fill={GRAY} />
                        <path d="M1.500 9a8 8 0 0 1 7-7M29.500 9a8 8 0 0 0-7-7M3.500 31l4-4M27.500 31l-4-4" fill="none" stroke={GRAY} strokeWidth="3.4" />
                        <path d="M15 8v9l5 6" fill="none" stroke="white" strokeWidth="2.8" />
                    </SmallIcon>
                    <SmallIcon $ml={8} width="31" height="34" viewBox="0 0 31 34" fill="none" stroke={GRAY}>
                        <path d="M2.500 27V15a13 13 0 0 1 26 0v12" strokeWidth="2.8" />
                        <path d="M5 24v6M26 24v6" strokeWidth="8" strokeLinecap="round" />
                    </SmallIcon>
                    <SmallIcon $ml={6} width="20" height="35" viewBox="0 0 20 35">
                        <rect x="5.5" y="0" width="9" height="3" fill={GRAY} />
                        <rect x="1.5" y="5.5" width="17" height="28" rx="4" fill="none" stroke={GRAY} strokeWidth="3" />
                        <rect x="5" y="16" width="10" height="13" fill={GRAY} />
                    </SmallIcon>
                    <SmallIcon $ml={11} width="35" height="33" viewBox="0 0 35 33" fill="none" stroke={GRAY} strokeWidth="3.4">
                        <path d="M7 30a16 16 0 1 1 21 0M11.500 25a9.500 9.500 0 1 1 12 0" />
                        <circle cx="17.5" cy="17.5" r="2.8" fill={GRAY} stroke="none" />
                    </SmallIcon>
                    <NetType $ml={4} $w={15} $weight={400}>1</NetType>
                    <NetType $ml={0} $w={17}>4G</NetType>
                    <Signal ml={0} />
                    <NetType $ml={12} $w={18}>4G</NetType>
                    <SmallIcon $ml={-18} width="18" height="10" viewBox="0 -22 18 10" stroke={GRAY} strokeWidth="2.6" fill="none">
                        <path d="M1 -6l4-4v9M10 -10v9l5-5" />
                    </SmallIcon>
                    <Signal ml={0} />
                    <BatteryLevel>90</BatteryLevel>
                </StatusGroup>
            </StatusBar>
            <TitleBar>
                <TitleLeft>
                    <svg width="33" height="56" fill="none" stroke="#222" strokeWidth="5"><path d="M31 2L4 28l27 26" /></svg>
                    <Logo><span>东方</span><span>财富</span></Logo>
                </TitleLeft>
                <TitleCenter>
                    <Title>恒生指数</Title>
                    <SubTitle>HSI</SubTitle>
                </TitleCenter>
                <TitleRight>
                    <AiBadge>
                        Ai
                        <AiStar width="14" height="15" viewBox="0 0 14 15"><path d="M7 1q1.500 5 6 6.500q-4.500 1.500-6 6.500q-1.500-5-6-6.500q4.500-1.500 6-6.500z" fill="#3366fb" /></AiStar>
                    </AiBadge>
                    <svg width="60" height="60" fill="none" stroke="#2b2b2b" strokeWidth="4.4" strokeLinecap="round">
                        <path d="M23 3H6q-3 0-3 3v48q0 3 3 3h48q3 0 3-3V38M37 3h20v20M56 4L28 32" />
                    </svg>
                    <svg width="62" height="62" fill="none" stroke="#2b2b2b" strokeWidth="4.4" strokeLinecap="round">
                        <circle cx="29.5" cy="29" r="26.5" />
                        <path d="M48 48l11 11" strokeWidth="4.6" />
                    </svg>
                </TitleRight>
            </TitleBar>
            <Quote>
                <Cell $top={19}><Num $size={60} $weight={500} $ls={-2.5} $color="#069c06">25530.51</Num></Cell>
                <Cell><Label>今开</Label><Num $color={RED} $ls={-0.4}>25710.61</Num></Cell>
                <Cell><Label>最高</Label><Num $color={RED} $ls={-0.4}>25801.34</Num></Cell>
                <Cell><Label>最低</Label><Num $color={GREEN} $ls={-0.4}>25471.50</Num></Cell>
                <Cell $top={20}><Num $size={34} $color={GREEN}>−0.04%</Num><Num $size={34} $color={GREEN} $ls={-0.5}>−10.27</Num></Cell>
                <Cell><Label>总量</Label><Num $size={32} $ls={-0.2}>147.8亿股</Num></Cell>
                <Cell><Label>金额</Label><Num $size={43} $ls={-0.6}>1825亿</Num></Cell>
                <Cell><Label>振幅</Label><Num $size={43} $ls={0.8}>1.29%</Num></Cell>
                <Cell><Label>昨收</Label><Num $size={36} $ls={-0.4}>25540.78</Num></Cell>
                <Cell><Label $size={37}>52周高</Label><Num $size={27} $color={RED} $ls={-0.2}>27381.84</Num></Cell>
                <Cell><Label $size={37}>52周低</Label><Num $size={27} $color={GREEN} $ls={-0.2}>18671.49</Num></Cell>
            </Quote>
            <Futures>
                <Label $size={35.3}>相关期货</Label>
                <SmallIcon $ml={5} width="33" height="33" viewBox="0 0 33 33" fill="none" stroke="#999" strokeWidth="2.4">
                    <circle cx="16.5" cy="16.5" r="15" />
                    <path d="M11.5 13q0-5 5-5t5 5q0 3-5 6v3M16.5 24v3" />
                </SmallIcon>
                <FutureName>恒生指数期货主力</FutureName>
                <Num $size={37} $color={RED} $ls={-0.2}>25605</Num>
                <FutureChange><Num $size={37} $color={RED} $ls={0.6}>0.14%</Num></FutureChange>
                <Label $size={35.3}>期现差</Label>
                <FutureDiff><Num $size={37} $color={RED}>74.49</Num></FutureDiff>
                <svg width="12" height="26" fill="none" stroke="#999" strokeWidth="2"><path d="M1 2l9 11-9 11" /></svg>
            </Futures>
            <Tabs>
                {tabs.map(t => <Tab key={t} $active={t === '日K'}>{t}</Tab>)}
                <Tab>更多<Caret $w={8} /></Tab>
                <Tab>
                    <svg width="56" height="54" viewBox="0 0 56 54" fill="none" stroke={GRAY} strokeWidth="4" strokeLinejoin="round">
                        <path d="M23 3h10l2.500 7.500 5.500 3 8-1.500 5 8.500-5 6.500 5 6.500-5 8.500-8-1.500-5.500 3L33 51H23l-2.500-7.500-5.500-3-8 1.500-5-8.500L7 27l-5-6.500L7 12l8 1.500 5.500-3z" />
                        <circle cx="28" cy="27" r="8.500" />
                    </svg>
                </Tab>
            </Tabs>
            <Legend>
                <Pill $w={108}>均线<Caret /></Pill>
                <MaGrid>
                    {maList.map(([text, color, up]) => (
                        <MaItem key={text} $color={color}><Num $size={34} $ls={-0.6}>{text}</Num><Arrow up={up} /></MaItem>
                    ))}
                </MaGrid>
                <Pill $w={126} $pad="0 0 0 12px">DK点<Corner /></Pill>
            </Legend>
            <PriceChart />
            <IndicatorHead $h={64}>
                <Pill $w={151} $pad="0 8px 0 4px">成交量<Caret /></Pill>
                <IndicatorValues $ml={4} $scale={0.754}>
                    <Value $size={37} $mr={15}>147.8亿股<Arrow size={34} /></Value>
                    <Value $size={37} $mr={15} $color={YELLOW}>MA1:143.7亿股<Arrow up size={34} /></Value>
                    <Value $size={37} $mr={15} $color={PURPLE}>MA2:129.7亿股<Arrow up size={34} /></Value>
                    <Value $size={37} $mr={15} $color="#109310">MA3:137.0亿股<Arrow size={34} /></Value>
                </IndicatorValues>
            </IndicatorHead>
            <VolumeChart />
            <IndicatorHead>
                <Pill $w={136} $pad="0 8px 0 4px">BOLL<Caret /></Pill>
                <IndicatorValues $ml={1}>
                    <Value $ls={-0.8}>MID:26189.40<Arrow size={35} /></Value>
                    <Value $ls={-0.7}>
                        <UpperBand>UP:27137.01<Arrow size={35} /></UpperBand>
                    </Value>
                    <Value $ls={-0.7} $color={PURPLE}>LOW:25241.78<Arrow size={35} /></Value>
                </IndicatorValues>
            </IndicatorHead>
            <BollChart />
            <IndicatorHead>
                <Pill $w={151} $pad="0 8px 0 3px">MACD<Caret /></Pill>
                <IndicatorValues $ml={3}>
                    <Value $size={39.5} $ls={-0.1}>DIF:−146.26<Arrow size={35} /></Value>
                    <Value $size={39.5} $color={YELLOW}>DEA:−104.67<Arrow size={35} /></Value>
                    <Value $size={39.5} $ls={-0.3} $color={PURPLE}>M:−83.19<Arrow size={35} /></Value>
                </IndicatorValues>
            </IndicatorHead>
            <MacdChart />
            <Dates>
                <Plot width="1055" height="85">
                    <path d="M347 2v15M701 2v15M1054 2v15" stroke={GRAY} strokeWidth="2.4" />
                    <AxisText x="6" y="49" w="166" size={36} color={GRAY}>20231020</AxisText>
                    <AxisText x="264" y="49" w="166" size={36} color={GRAY}>20240708</AxisText>
                    <AxisText x="618" y="49" w="166" size={36} color={GRAY}>20250326</AxisText>
                    <AxisText x="888" y="49" w="166" size={36} color={GRAY}>20251211</AxisText>
                </Plot>
            </Dates>
            <ForumTabs>
                <Tab $active $size={44} $line={8} $top={4}>股吧</Tab>
                <Tab $size={44} $top={4}>成份股</Tab>
                <Tab $size={44} $top={4}>关联基金</Tab>
            </ForumTabs>
            <PostFilter>
                <FilterText>最新</FilterText>
                <SmallIcon $ml={8} width="24" height="30" fill="none" stroke="#666" strokeWidth="2.4"><path d="M2 17l9 10 9-10" /></SmallIcon>
                <HotText>最热</HotText>
                <svg width="44" height="44" fill="none" stroke="#222" strokeWidth="4">
                    <path d="M5 3h31q3 0 2 3L27 20v20M14 40V20L3 6" />
                    <path d="M31 28h10" stroke={ORANGE} />
                </svg>
                <AllText>全部</AllText>
            </PostFilter>
            <BottomBar>
                <IndexBox>
                    <UpMark />
                    <IndexPrice>48057.75</IndexPrice>
                    <IndexRow>
                        <Label $size={35}>道指</Label>
                        <Num $size={37} $color={RED} $ls={0.4}>1.05%</Num>
                    </IndexRow>
                </IndexBox>
                <BarItem>
                    <svg width="62" height="64" fill="none" stroke={GRAY} strokeWidth="3.4">
                        <rect x="3" y="3" width="56" height="49" rx="5" />
                        <path d="M10 60h43M13 35l12-12 9 9 15-15M39 17h10v9" />
                    </svg>
                    买指数
                </BarItem>
                <BarItem>
                    <svg width="62" height="64" fill="none" stroke={GRAY} strokeWidth="3.4">
                        <path d="M42 6H12q-7 0-7 7v38q0 7 7 7h38q7 0 7-7V22" />
                        <path d="M25 38L49 15M51 12l5-6" strokeWidth="6" />
                    </svg>
                    发帖
                </BarItem>
                <BarItem>
                    <svg width="62" height="64" fill="none" stroke={GRAY} strokeWidth="3.4">
                        <rect x="6" y="8" width="22" height="22" rx="3" />
                        <rect x="6" y="35" width="22" height="22" rx="3" />
                        <rect x="34" y="35" width="22" height="22" rx="3" />
                        <path d="M45 7l12 12-12 12-12-12z" strokeLinejoin="round" />
                    </svg>
                    功能
                </BarItem>
                <BarItem $color={ORANGE}>
                    <svg width="62" height="64" fill="none" stroke={ORANGE} strokeWidth="3">
                        <circle cx="31" cy="32" r="27" />
                        <path d="M17 32h28M31 18v28" />
                    </svg>
                    加自选
                </BarItem>
            </BottomBar>
        </Container>
    )
}

const UpperBand = styled.span`
display:flex;
align-items:center;
gap:10px;
color:${YELLOW};
`;

const BatteryLevel = styled.span`
position:relative;
display:flex;
align-items:center;
justify-content:center;
width:53px;
height:31px;
margin:0 8px 0 13px;
border:3px solid ${GRAY};
border-radius:8px;
background:linear-gradient(90deg, #c8c8c8 0 38px, transparent 38px) 3px 3px / 100% 19px no-repeat;
font-size:27px;
line-height:1;
&::after{
    content:'';
    position:absolute;
    right:-10px;
    width:4px;
    height:17px;
    border-radius:2px;
    background-color:${GRAY};
}
`;

const AiBadge = styled.div`
position:relative;
display:flex;
align-items:center;
justify-content:center;
width:72px;
height:72px;
border:4px solid #456bea;
border-radius:50%;
color:#3366fb;
font-family:Lato, sans-serif;
font-size:39px;
font-weight:900;
letter-spacing:1px;
line-height:1;
-webkit-text-stroke:2px #3366fb;
`;

const AiStar = styled.svg`
position:absolute;
right:10px;
top:11px;
background-color:#fefefe;
`;

const FutureChange = styled.div`
flex:1;
padding-left:26px;
`;

const FutureDiff = styled.div`
padding:0 10px 0 25px;
`;

const HotText = styled(FilterText)`
flex:1;
margin-left:61px;
color:#666;
`;

const AllText = styled(FilterText)`
margin-left:16px;
color:#666;
font-size:41px;
font-weight:400;
`;

const IndexPrice = styled.div`
margin-top:14px;
color:${RED};
font-size:40px;
letter-spacing:-0.4px;
line-height:1;
`;
